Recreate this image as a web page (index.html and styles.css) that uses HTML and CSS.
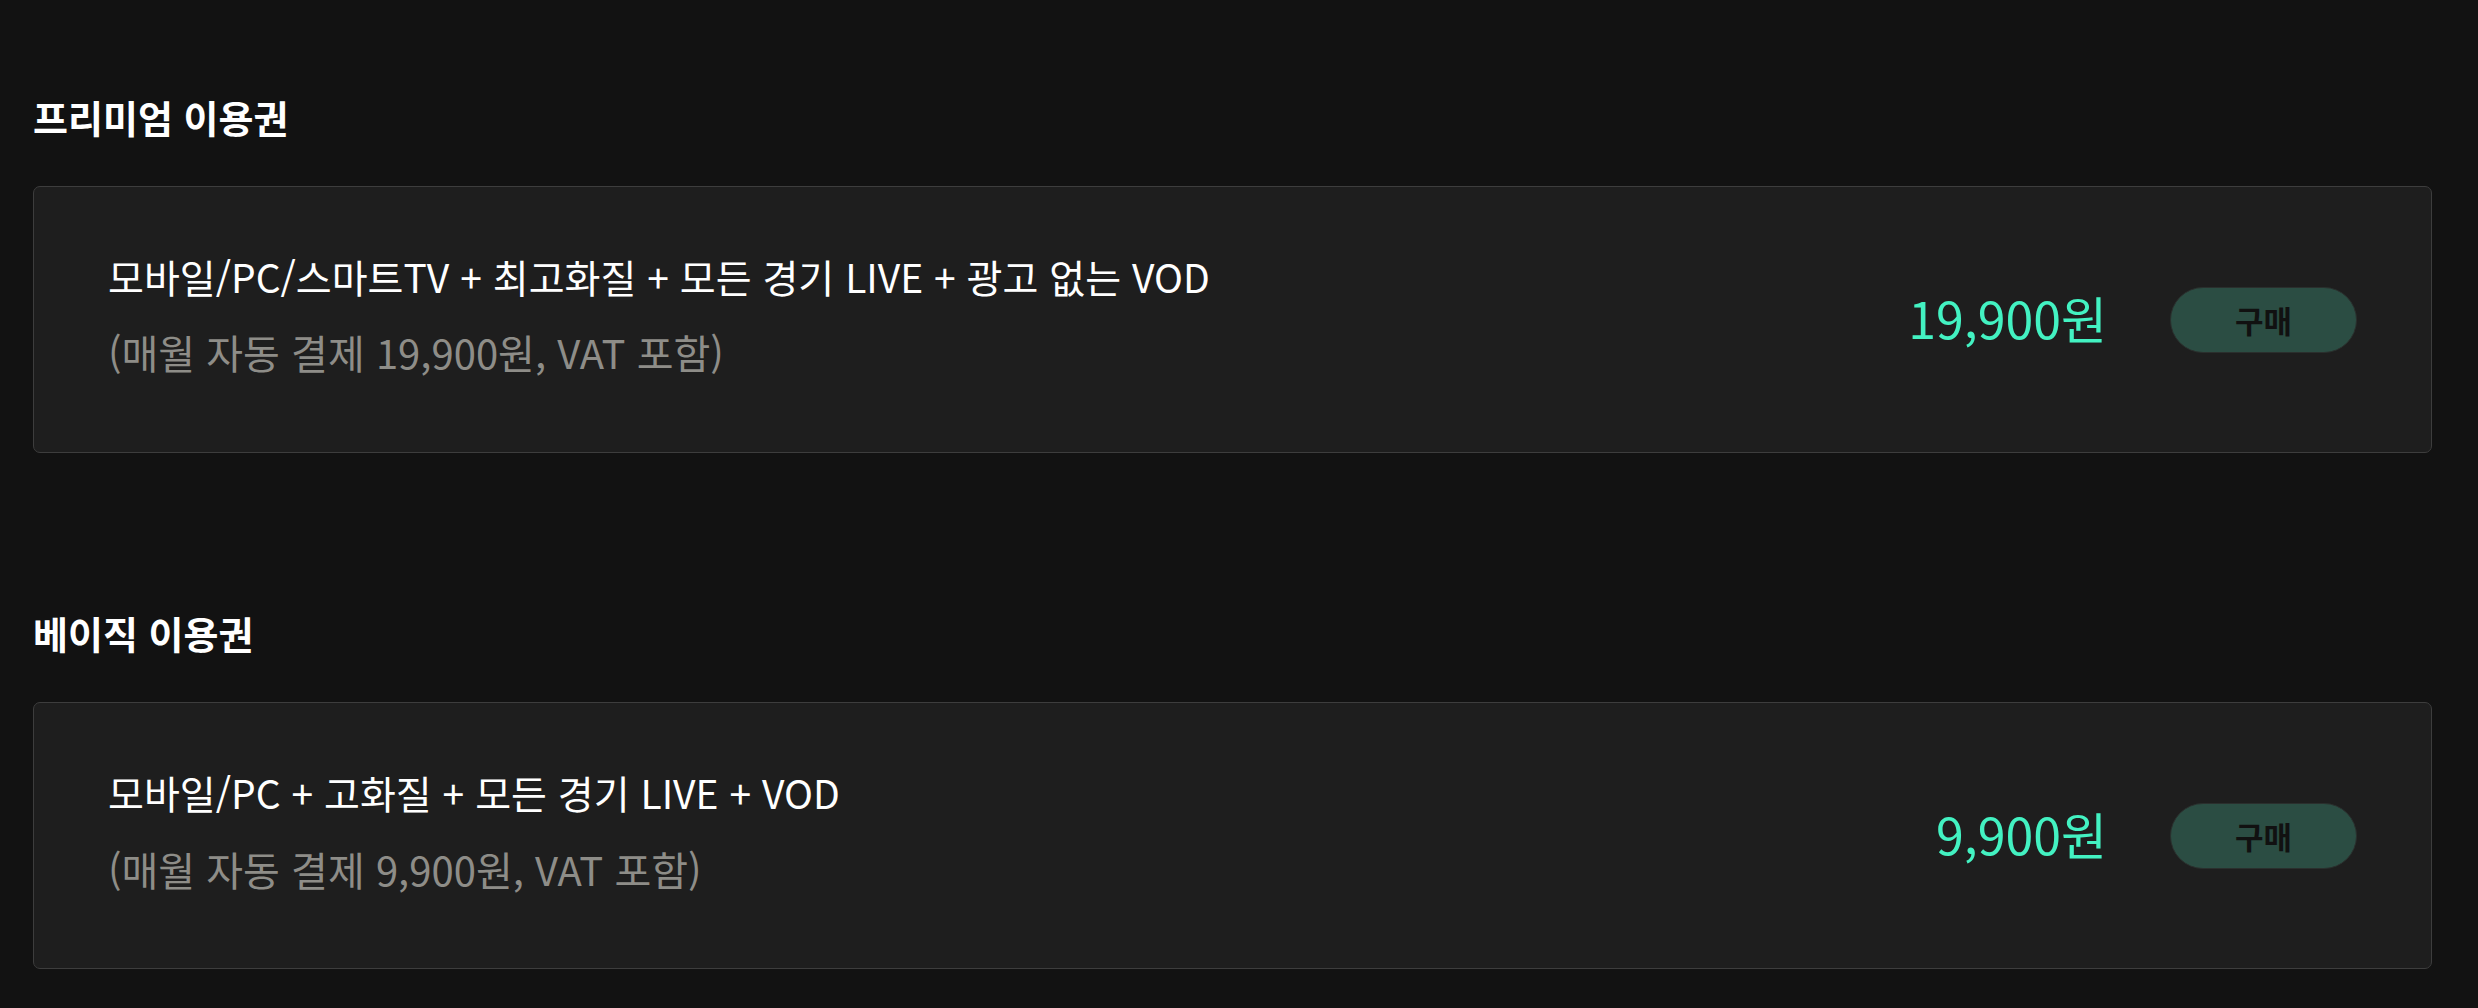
FILE: index.html
```html
<!DOCTYPE html>
<html lang="ko">
<head>
    <meta charset="UTF-8">
    <title>이용권 구매</title>
    <link rel="stylesheet" href="styles.css">
</head>
<body>
    <div class="page">
        <section class="plan">
            <h2>프리미엄 이용권</h2>
            <div class="card">
                <div class="info">
                    <p class="desc">모바일/PC/스마트TV + 최고화질 + 모든 경기 LIVE + 광고 없는 VOD</p>
                    <p class="sub">(매월 자동 결제 19,900원, VAT 포함)</p>
                </div>
                <div class="price">19,900원</div>
                <button class="buy">구매</button>
            </div>
        </section>

        <section class="plan">
            <h2>베이직 이용권</h2>
            <div class="card">
                <div class="info">
                    <p class="desc">모바일/PC + 고화질 + 모든 경기 LIVE + VOD</p>
                    <p class="sub">(매월 자동 결제 9,900원, VAT 포함)</p>
                </div>
                <div class="price">9,900원</div>
                <button class="buy">구매</button>
            </div>
        </section>
    </div>
</body>
</html>
```

FILE: styles.css
```css
body {
    margin: 0;
    background-color: #121212;
    color: #fff;
    font-family: 'Noto Sans CJK KR', 'Noto Sans', sans-serif;
}

.page {
    padding: 0 46px 0 33px;
}

.plan {
    padding-top: 90px;
}

.plan + .plan {
    padding-top: 153px;
}

.plan h2 {
    margin: 0 0 43px;
    font-size: 38px;
    line-height: 1.4;
    font-weight: 700;
}

/* ---- 카드 ---- */
.card {
    display: flex;
    align-items: center;
    box-sizing: border-box;
    height: 267px;
    padding: 0 74px;
    background-color: #1e1e1e;
    border: 1px solid #3d3d3d;
    border-radius: 7px;
}

.info {
    flex: 1;
    display: flex;
    flex-direction: column;
    gap: 21px;
    padding-bottom: 10px;
}

.info p {
    margin: 0;
    font-size: 39px;
    line-height: 1.4;
}

.desc {
    color: #fff;
}

.info .sub {
    font-size: 40px;
    color: #8e8d88;
}

.price {
    margin-right: 63px;
    padding-bottom: 6px;
    font-size: 50px;
    color: #43f2c2;
}

.buy {
    width: 187px;
    height: 66px;
    background-color: #2b4d43;
    border: 1px solid #2a2f2d;
    border-radius: 33px;
    color: #111;
    font-family: inherit;
    font-size: 31px;
    font-weight: 700;
    cursor: pointer;
}
```
